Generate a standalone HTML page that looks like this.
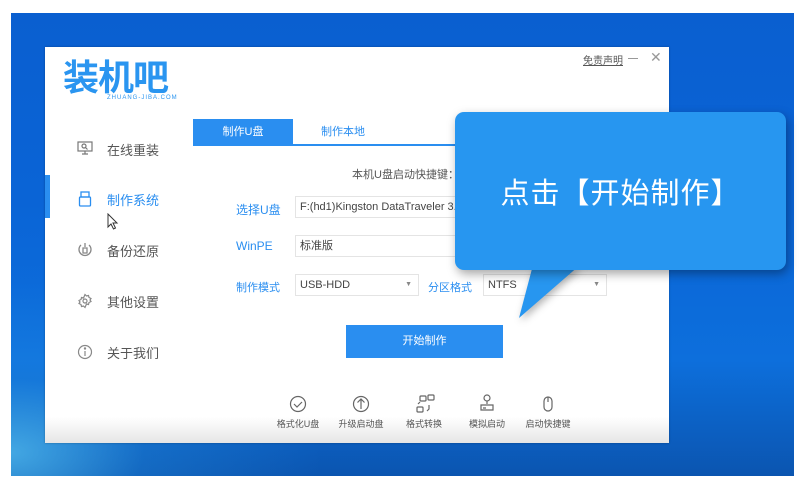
<!DOCTYPE html>
<html><head><meta charset="utf-8"><style>
*{margin:0;padding:0;box-sizing:border-box}
body{width:802px;height:483px;background:#fff;position:relative;overflow:hidden;font-family:"Liberation Sans","Noto Sans CJK SC",sans-serif}
.desk{position:absolute;left:11px;top:13px;width:783px;height:463px;background:linear-gradient(180deg,#0a5fd0 0%,#0a64d6 40%,#0d6fdc 75%,#0b55b0 100%)}
.desk2{position:absolute;left:11px;top:13px;width:783px;height:463px;background:radial-gradient(ellipse at 0% 95%,rgba(90,200,245,.7) 0%,rgba(40,150,230,.3) 12%,rgba(0,0,0,0) 28%)}
.win{position:absolute;left:45px;top:47px;width:624px;height:396px;background:#fff;box-shadow:0 0 2px rgba(0,0,0,.3)}
.fade{position:absolute;left:0;right:0;bottom:0;height:26px;background:linear-gradient(#fff,#e6e6e6)}
.abs{position:absolute}
.logo{left:18px;top:9px;font-size:36px;font-weight:bold;color:#2a95f0;letter-spacing:-1px;line-height:44px}
.sub{left:62px;top:48px;font-size:6px;color:#2a95f0;letter-spacing:1px}
.nav{left:62px;font-size:13px;color:#555}
.tabs{left:148px;top:72px;width:476px;height:27px;border-bottom:2px solid #2a8ef0}
.tab1{left:148px;top:72px;width:100px;height:27px;background:#2a8ef0;color:#fff;font-size:11px;text-align:center;line-height:27px}
.tab2{left:248px;top:72px;width:100px;height:27px;color:#2a8ef0;font-size:11px;text-align:center;line-height:27px}
.lbl{font-size:12px;color:#2a8ef0}
.fld{border:1px solid #e4e4e4;height:22px;font-size:11px;color:#444;line-height:20px;padding-left:4px}
.btn{left:301px;top:278px;width:157px;height:33px;background:#2a8ef0;color:#fff;font-size:11px;text-align:center;line-height:33px}
.bi{font-size:9px;color:#555;text-align:center;width:60px}
.call{position:absolute;left:455px;top:112px;width:331px;height:158px;background:#2796f0;border-radius:9px;box-shadow:2px 4px 10px rgba(0,0,0,.35);color:#fff;font-size:29px;line-height:164px;text-align:center;letter-spacing:1px}
</style></head><body>
<div class="desk"></div><div class="desk2"></div>
<div class="win">
<div class="fade"></div>
<div class="abs logo">装机吧</div>
<div class="abs sub">ZHUANG-JIBA.COM</div>
<div class="abs" style="left:538px;top:5px;font-size:10px;color:#555;text-decoration:underline">免责声明</div>
<div class="abs" style="left:583px;top:11px;width:10px;height:1px;background:#999"></div>
<div class="abs" style="left:605px;top:2px;font-size:14px;color:#999">✕</div>
<div class="abs" style="left:0;top:128px;width:5px;height:43px;background:#2a8ef0"></div>
<svg class="abs" style="left:32px;top:93px" width="16" height="16" viewBox="0 0 16 16" fill="none" stroke="#777" stroke-width="1.2"><rect x="1" y="2" width="14" height="9"/><circle cx="7" cy="6" r="2"/><path d="M8.5 7.5l2 2M5 14h6M8 11v3"/></svg>
<svg class="abs" style="left:33px;top:144px" width="14" height="16" viewBox="0 0 14 16" fill="none" stroke="#2a8ef0" stroke-width="1.3"><rect x="3" y="1" width="8" height="5"/><rect x="1.5" y="6" width="11" height="9" rx="1"/></svg>
<svg class="abs" style="left:32px;top:195px" width="16" height="16" viewBox="0 0 16 16" fill="none" stroke="#888" stroke-width="1.3"><path d="M4 3a6 6 0 1 0 8 0"/><path d="M8 1v4M6 6h4v5H6z"/></svg>
<svg class="abs" style="left:32px;top:246px" width="16" height="16" viewBox="0 0 16 16" fill="none" stroke="#888" stroke-width="1.2"><path d="M8 1.5l1.5 1.5 2-.5.5 2 2 1-1 1.5 1 1.5-2 1-.5 2-2-.5L8 14.5 6.5 13l-2 .5-.5-2-2-1 1-1.5-1-1.5 2-1 .5-2 2 .5z"/><circle cx="8" cy="8" r="2"/></svg>
<svg class="abs" style="left:32px;top:297px" width="16" height="16" viewBox="0 0 16 16" fill="none" stroke="#888" stroke-width="1.2"><circle cx="8" cy="8" r="6.5"/><path d="M8 7v5"/><circle cx="8" cy="4.5" r=".6" fill="#888"/></svg>
<div class="abs nav" style="top:93px">在线重装</div>
<div class="abs nav" style="top:143px;color:#2a8ef0">制作系统</div>
<div class="abs nav" style="top:194px">备份还原</div>
<div class="abs nav" style="top:245px">其他设置</div>
<div class="abs nav" style="top:296px">关于我们</div>
<svg class="abs" style="left:62px;top:166px" width="12" height="18" viewBox="0 0 12 18"><path d="M1 1v13l3-3 2.5 5 2-1-2.5-5h4z" fill="#fff" stroke="#333" stroke-width="1"/></svg>
<div class="abs tabs"></div>
<div class="abs tab1">制作U盘</div>
<div class="abs tab2">制作本地</div>
<div class="abs" style="left:307px;top:119px;font-size:11px;color:#555">本机U盘启动快捷键：</div>
<div class="abs lbl" style="left:191px;top:154px">选择U盘</div>
<div class="abs fld" style="left:250px;top:149px;width:250px">F:(hd1)Kingston DataTraveler 3.0</div>
<div class="abs lbl" style="left:191px;top:192px">WinPE</div>
<div class="abs fld" style="left:250px;top:188px;width:250px">标准版</div>
<div class="abs lbl" style="left:191px;top:232px;font-size:11px">制作模式</div>
<div class="abs fld" style="left:250px;top:227px;width:124px">USB-HDD<span style="position:absolute;right:6px;color:#888;font-size:7px">▼</span></div>
<div class="abs lbl" style="left:383px;top:232px;font-size:11px">分区格式</div>
<div class="abs fld" style="left:438px;top:227px;width:124px">NTFS<span style="position:absolute;right:6px;color:#888;font-size:7px">▼</span></div>
<div class="abs btn">开始制作</div>
<svg class="abs" style="left:0;top:0" width="624" height="396" fill="none" stroke="#666" stroke-width="1.2">
<circle cx="253" cy="357" r="7.5"/><path d="M249 357l3 3 5-5"/>
<circle cx="316" cy="357" r="7.5"/><path d="M316 362v-10M312.5 355.5l3.5-3.5 3.5 3.5"/>
<rect x="375" y="349" width="6" height="5" rx="1"/><rect x="383" y="348" width="6" height="5" rx="1"/><rect x="372" y="360" width="6" height="5" rx="1"/><path d="M384 358v4l-2 2M373 357l2-2"/>
<circle cx="442" cy="351" r="3"/><path d="M442 354v3M436 358h12v5h-12zM438 361h3"/>
<rect x="499" y="350" width="8" height="14" rx="4"/><path d="M503 350v5"/>
</svg>
<div class="abs bi" style="left:223px;top:370px">格式化U盘</div>
<div class="abs bi" style="left:286px;top:370px">升级启动盘</div>
<div class="abs bi" style="left:349px;top:370px">格式转换</div>
<div class="abs bi" style="left:412px;top:370px">模拟启动</div>
<div class="abs bi" style="left:473px;top:370px">启动快捷键</div>
</div>
<svg class="abs" style="left:0;top:0;filter:drop-shadow(2px 3px 4px rgba(0,0,0,.3))" width="802" height="483"><path d="M533 265L580 265L519 318z" fill="#2796f0"/></svg>
<div class="call">点击【开始制作】</div>
</body></html>
